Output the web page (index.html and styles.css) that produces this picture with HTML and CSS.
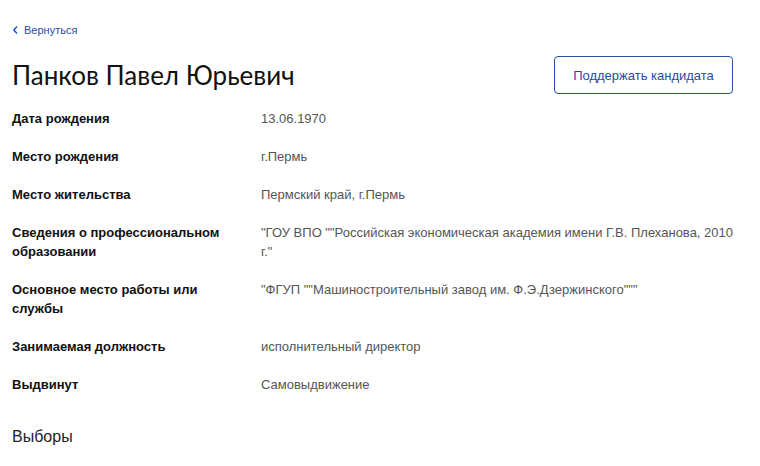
FILE: index.html
```html
<!DOCTYPE html>
<html lang="ru">
<head>
    <meta charset="UTF-8">
    <title>Панков Павел Юрьевич</title>
    <link rel="stylesheet" href="styles.css">
</head>
<body>
    <div class="page">
        <a class="back-link" href="#">
            <svg width="7" height="10" viewBox="0 0 7 10"><path d="M5 1.5L1.8 5 5 8.5" fill="none" stroke="#0d4cd3" stroke-width="1.3"/></svg>
            Вернуться
        </a>
        <div class="header">
            <h1>Панков Павел Юрьевич</h1>
            <button class="support-btn">Поддержать кандидата</button>
        </div>
        <div class="info">
            <div class="info-row">
                <div class="info-label">Дата рождения</div>
                <div class="info-value">13.06.1970</div>
            </div>
            <div class="info-row">
                <div class="info-label">Место рождения</div>
                <div class="info-value">г.Пермь</div>
            </div>
            <div class="info-row">
                <div class="info-label">Место жительства</div>
                <div class="info-value">Пермский край, г.Пермь</div>
            </div>
            <div class="info-row">
                <div class="info-label">Сведения о профессиональном образовании</div>
                <div class="info-value">"ГОУ ВПО ""Российская экономическая академия имени Г.В. Плеханова, 2010 г."</div>
            </div>
            <div class="info-row">
                <div class="info-label">Основное место работы или службы</div>
                <div class="info-value">"ФГУП ""Машиностроительный завод им. Ф.Э.Дзержинского"""</div>
            </div>
            <div class="info-row">
                <div class="info-label">Занимаемая должность</div>
                <div class="info-value">исполнительный директор</div>
            </div>
            <div class="info-row">
                <div class="info-label">Выдвинут</div>
                <div class="info-value">Самовыдвижение</div>
            </div>
        </div>
        <h2>Выборы</h2>
    </div>
</body>
</html>
```

FILE: styles.css
```css
body {
    margin: 0;
    background-color: #ffffff;
    font-family: "Liberation Sans", Arial, sans-serif;
    color: #1a1a1a;
}
.page {
    padding: 24px 27px 0 12px;
}
.back-link {
    display: flex;
    align-items: center;
    gap: 5px;
    font-size: 11px;
    color: #2a4a9e;
    text-decoration: none;
}
.header {
    display: flex;
    justify-content: space-between;
    align-items: center;
    margin-top: 20px;
}
h1 {
    margin: 0;
    font-family: Lato, "Liberation Sans", sans-serif;
    font-size: 26px;
    font-weight: 400;
    color: #111;
}
.support-btn {
    width: 179px;
    height: 38px;
    border: 1px solid #2a4fa8;
    border-radius: 4px;
    background-color: #fff;
    color: #2a4a9e;
    font-family: "Liberation Sans", Arial, sans-serif;
    font-size: 13px;
    cursor: pointer;
}
.info {
    margin-top: 5px;
}
.info-row {
    display: flex;
    padding: 9.5px 0;
    font-size: 13px;
    line-height: 19px;
}
.info-label {
    width: 214px;
    margin-right: 35px;
    font-weight: 700;
    color: #111;
}
.info-value {
    width: 472px;
    color: #555;
}
h2 {
    margin: 25px 0 0;
    font-size: 16px;
    font-weight: 400;
    color: #222;
}
```
